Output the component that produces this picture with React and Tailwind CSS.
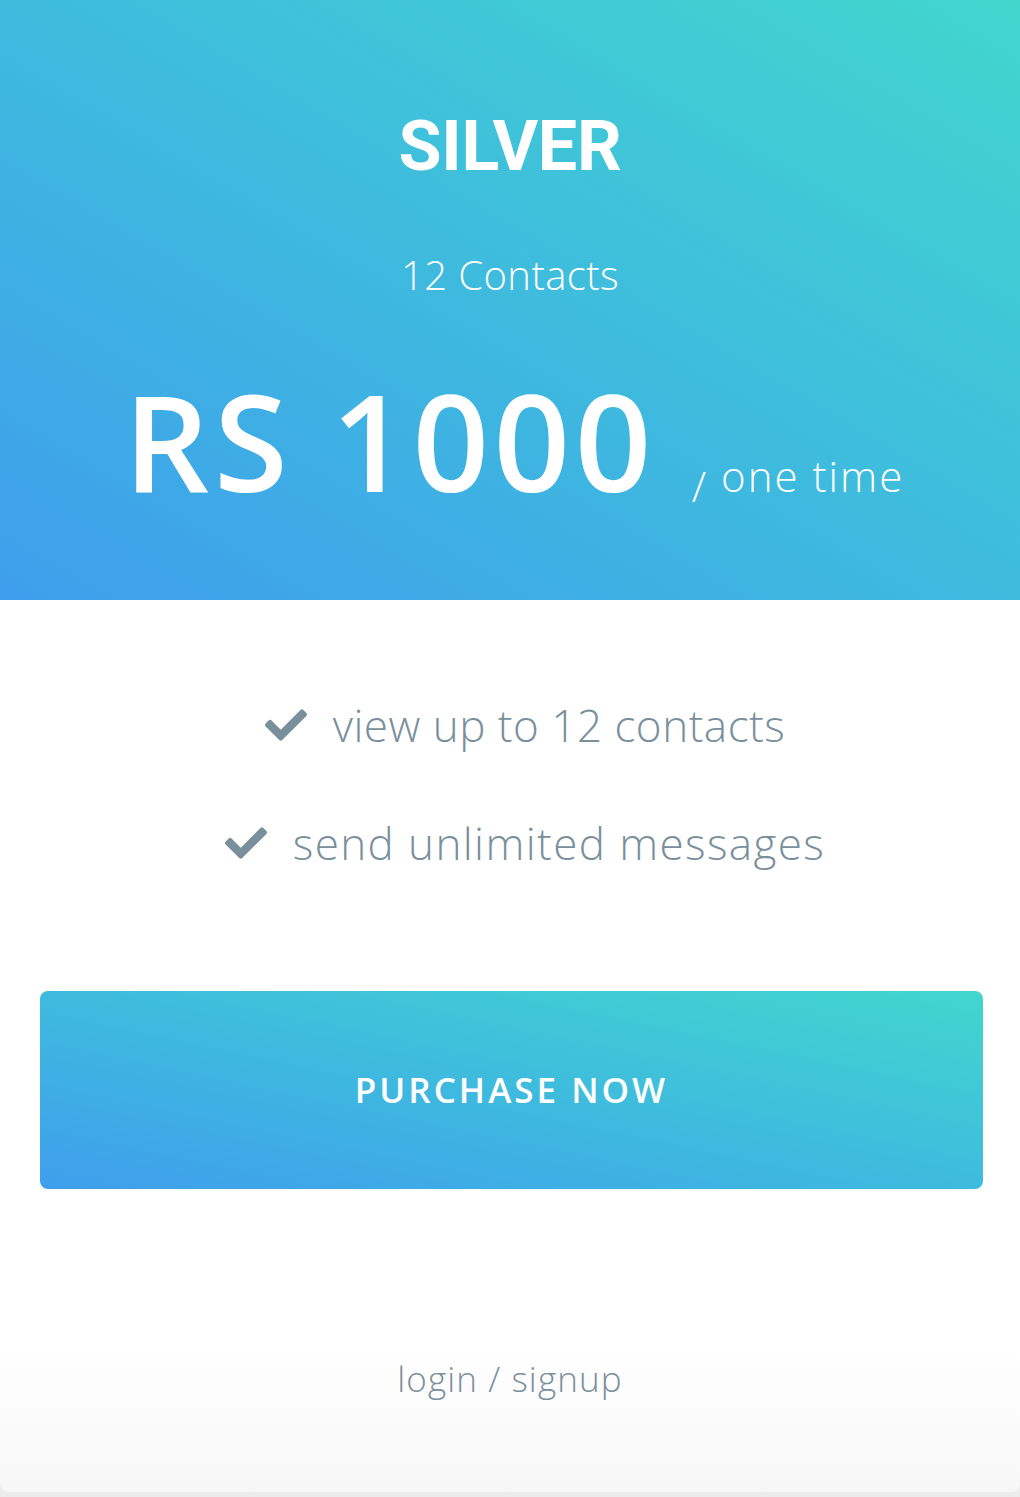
import React from "react";
import { FaCheck } from "react-icons/fa";

export default function App() {
  const body = { fontFamily: '"Open Sans", "Liberation Sans", sans-serif' };
  return (
    <div className="min-h-[1497px] bg-[#ececec]" style={body}>
      <div className="rounded-b-lg bg-gradient-to-b from-white from-[90%] to-[#f7f7f7] overflow-hidden">
        <div className="h-[600px] bg-gradient-to-tr from-[#3f9eec] to-[#42d6cd] flex flex-col items-center text-white">
          <h1
            className="mt-[111px] text-[70px] leading-none font-bold tracking-[-0.3px]"
            style={{ fontFamily: 'Roboto, "Open Sans", sans-serif' }}
          >
            SILVER
          </h1>
          <div className="mt-[74px] text-[40px] leading-none font-light tracking-[0.4px]">12 Contacts</div>
          <div className="mt-[78px] flex items-baseline gap-[36px] pl-[8px]">
            <span className="text-[134px] leading-none font-semibold tracking-[4.5px]">RS 1000</span>
            <span className="text-[42px] leading-none font-light tracking-[2px]">
              <span className="inline-block translate-y-[10px]">/</span> one time
            </span>
          </div>
        </div>
        <div className="flex flex-col items-center pt-[100px] text-[#7a8f9c]">
          <div className="flex items-center gap-[26px] h-[50px] pl-[30px]">
            <FaCheck className="w-[42px] h-[42px]" />
            <span className="text-[44px] font-light leading-none tracking-[0.5px]">view up to 12 contacts</span>
          </div>
          <div className="flex items-center gap-[26px] h-[50px] mt-[68px] pl-[30px]">
            <FaCheck className="w-[42px] h-[42px]" />
            <span className="text-[44px] font-light leading-none tracking-[1.4px]">send unlimited messages</span>
          </div>
        </div>
        <div className="pl-[40px] pr-[37px] mt-[123px]">
          <button className="w-full h-[198px] rounded-lg bg-gradient-to-tr from-[#3f9eec] to-[#42d6cd] text-white text-[35px] font-semibold tracking-[3px]">
            PURCHASE NOW
          </button>
        </div>
        <div className="flex justify-center mt-[172px] pb-[96px]">
          <span className="text-[35px] font-light text-[#7a8f9c] leading-none tracking-[1.1px]">login / signup</span>
        </div>
      </div>
    </div>
  );
}
